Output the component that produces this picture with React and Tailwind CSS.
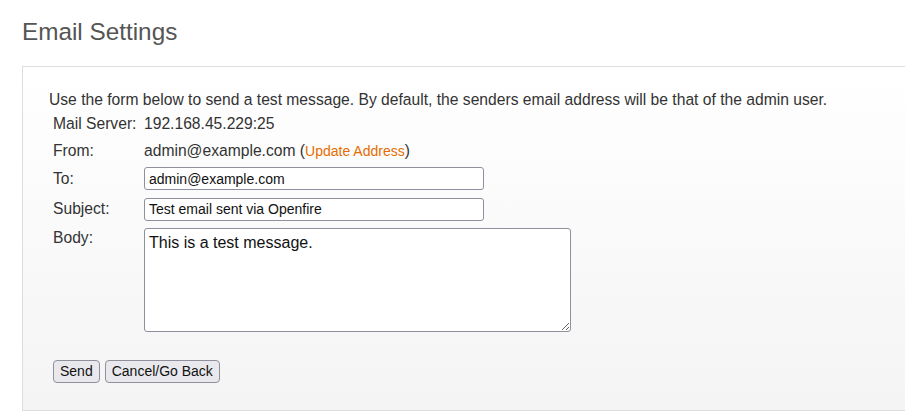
import React from "react";

const Row = ({ label, className = "", labelClass = "", children }) => (
  <div className={`flex ${className}`}>
    <div className={`w-[91px] shrink-0 ${labelClass}`}>{label}</div>
    <div className="flex-1">{children}</div>
  </div>
);

const fieldClass =
  "block bg-white border border-[#8f8f9d] rounded-[3px] text-[#111] outline-none";

export default function App() {
  return (
    <div
      className="w-[905px] h-[415px] overflow-hidden bg-white text-[#333]"
      style={{ fontFamily: '"Liberation Sans", Arial, sans-serif' }}
    >
      <h1 className="ml-[22px] pt-[18px] text-[24.3px] leading-[28px] text-[#555] font-normal">
        Email Settings
      </h1>

      <div className="ml-[22px] mt-[20px] w-[900px] border border-[#dddddd] bg-linear-to-b from-white to-[#f4f4f4] pl-[26px] pt-[24px] pb-[27px]">
        <p className="text-[15.65px] leading-[18px]">
          Use the form below to send a test message. By default, the senders
          email address will be that of the admin user.
        </p>

        <div className="ml-[4px] text-[15.65px]">
          <Row label="Mail Server:" className="mt-[3px] h-[24px] items-center">
            192.168.45.229:25
          </Row>
          <Row label="From:" className="mt-[3px] h-[24px] items-center">
            admin@example.com (
            <a href="#" className="text-[#e66c00] text-[14px]">
              Update Address
            </a>
            )
          </Row>
          <Row label="To:" className="mt-[1px] h-[29px] items-center">
            <input
              type="text"
              defaultValue="admin@example.com"
              className={`${fieldClass} w-[340px] h-[23px] px-[4px] text-[14px]`}
            />
          </Row>
          <Row label="Subject:" className="mt-[3px] h-[26px] items-center">
            <input
              type="text"
              defaultValue="Test email sent via Openfire"
              className={`${fieldClass} w-[340px] h-[23px] px-[4px] text-[14px]`}
            />
          </Row>
          <Row
            label="Body:"
            className="mt-[3px] items-start"
            labelClass="mt-[4px] leading-[18px]"
          >
            <textarea
              defaultValue="This is a test message."
              className={`${fieldClass} mt-[3px] w-[427px] h-[104px] px-[4px] py-[4px] text-[16px] leading-[20px] resize`}
            />
          </Row>
        </div>

        <div className="ml-[4px] mt-[28px] flex gap-[5px] text-[14px]">
          <button className="h-[23px] px-[6px] bg-[#e9e9ed] border border-[#8f8f9d] rounded-[4px] text-[#111]">
            Send
          </button>
          <button className="h-[23px] px-[6px] bg-[#e9e9ed] border border-[#8f8f9d] rounded-[4px] text-[#111]">
            Cancel/Go Back
          </button>
        </div>
      </div>
    </div>
  );
}
